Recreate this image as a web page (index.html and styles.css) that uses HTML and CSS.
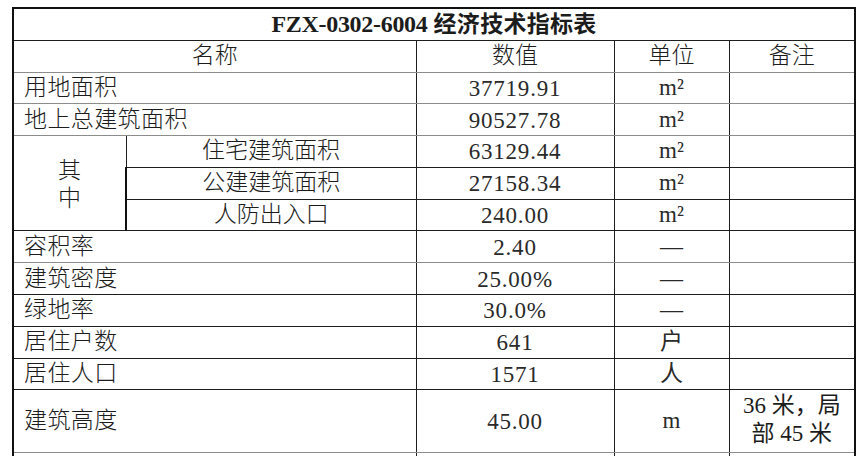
FILE: index.html
```html
<!DOCTYPE html>
<html lang="zh-CN">
<head>
<meta charset="utf-8">
<title>FZX-0302-6004 经济技术指标表</title>
<link rel="stylesheet" href="styles.css">
</head>
<body>
<div class="sheet">
<table class="grid">
  <colgroup>
    <col class="c-a">
    <col class="c-b">
    <col class="c-val">
    <col class="c-unit">
    <col class="c-note">
  </colgroup>
  <tr class="r-title">
    <td colspan="5" class="title"><span class="title-code">FZX-0302-6004</span> 经济技术指标表</td>
  </tr>
  <tr class="r-head soft">
    <td colspan="2" class="ctr">名称</td>
    <td class="ctr">数值</td>
    <td class="ctr">单位</td>
    <td class="ctr">备注</td>
  </tr>
  <tr class="r soft">
    <td colspan="2" class="lbl">用地面积</td>
    <td class="num">37719.91</td>
    <td class="unit">m²</td>
    <td></td>
  </tr>
  <tr class="r soft">
    <td colspan="2" class="lbl">地上总建筑面积</td>
    <td class="num">90527.78</td>
    <td class="unit">m²</td>
    <td></td>
  </tr>
  <tr class="r">
    <td rowspan="3" class="ctr sub-head">其<br>中</td>
    <td class="ctr">住宅建筑面积</td>
    <td class="num">63129.44</td>
    <td class="unit">m²</td>
    <td></td>
  </tr>
  <tr class="r">
    <td class="ctr">公建建筑面积</td>
    <td class="num">27158.34</td>
    <td class="unit">m²</td>
    <td></td>
  </tr>
  <tr class="r">
    <td class="ctr">人防出入口</td>
    <td class="num">240.00</td>
    <td class="unit">m²</td>
    <td></td>
  </tr>
  <tr class="r soft">
    <td colspan="2" class="lbl">容积率</td>
    <td class="num">2.40</td>
    <td class="unit">—</td>
    <td></td>
  </tr>
  <tr class="r">
    <td colspan="2" class="lbl">建筑密度</td>
    <td class="num">25.00%</td>
    <td class="unit">—</td>
    <td></td>
  </tr>
  <tr class="r">
    <td colspan="2" class="lbl">绿地率</td>
    <td class="num">30.0%</td>
    <td class="unit">—</td>
    <td></td>
  </tr>
  <tr class="r">
    <td colspan="2" class="lbl">居住户数</td>
    <td class="num">641</td>
    <td class="unit">户</td>
    <td></td>
  </tr>
  <tr class="r">
    <td colspan="2" class="lbl">居住人口</td>
    <td class="num">1571</td>
    <td class="unit">人</td>
    <td></td>
  </tr>
  <tr class="r-tall soft">
    <td colspan="2" class="lbl">建筑高度</td>
    <td class="num">45.00</td>
    <td class="unit">m</td>
    <td class="note">36 米，局<br>部 45 米</td>
  </tr>
  <tr class="r-cut">
    <td colspan="2"></td>
    <td></td>
    <td></td>
    <td></td>
  </tr>
</table>
</div>
</body>
</html>
```
FILE: styles.css
```css
html, body {
  margin: 0;
  padding: 0;
  background: #ffffff;
}

body {
  width: 858px;
  height: 456px;
  overflow: hidden;
  font-family: "Liberation Serif", "Noto Sans CJK SC", serif;
  color: #1c1c1c;
}

.sheet {
  padding: 7px 0 0 12px;
}

.grid {
  border-collapse: collapse;
  table-layout: fixed;
  width: 842px;
  border: 2px solid #111;
  border-bottom: none;
  font-size: 23px;
}

.c-a { width: 113px; }
.c-b { width: 290px; }
.c-val { width: 198px; }
.c-unit { width: 115px; }
.c-note { width: 126px; }

.grid td {
  border: 1px solid #1e1e1e;
  padding: 0;
  line-height: 28px;
  overflow: hidden;
  white-space: nowrap;
}

.grid tr:first-child td {
  border-top: 2px solid #111;
}

.grid td:last-child {
  border-right: 2px solid #111;
}

.grid td:first-child {
  border-left: 2px solid #111;
}

.soft td {
  border-bottom-color: #8c8c8c;
}

.r-title { height: 32px; }
.r-head { height: 32px; }
.r { height: 31.8px; }
.r-tall { height: 63px; }
.r-cut { height: 20px; }

.title {
  text-align: center;
  font-weight: 700;
  letter-spacing: 0.3px;
}

.title-code {
  font-size: 24px;
  letter-spacing: -0.3px;
}

.ctr {
  text-align: center;
  font-weight: 300;
}

.lbl {
  text-align: left;
  padding-left: 10px !important;
  font-weight: 300;
  letter-spacing: 0.4px;
}

.num {
  text-align: center;
  letter-spacing: 0.8px;
  padding-top: 2px !important;
  color: #2a2a2a;
}

.unit {
  text-align: center;
  color: #2a2a2a;
}

.sub-head {
  line-height: 30px;
  padding-top: 4px !important;
}

.note {
  text-align: center;
  white-space: normal;
  line-height: 25px;
  padding-bottom: 2px !important;
}
```
